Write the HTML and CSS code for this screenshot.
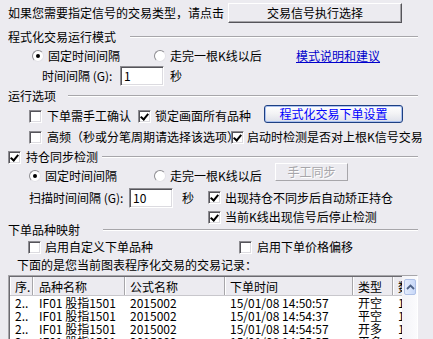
FILE: index.html
```html
<!DOCTYPE html>
<html lang="zh-CN">
<head>
    <meta charset="UTF-8">
    <title>程式化交易设置</title>
    <link rel="stylesheet" href="styles.css">
</head>
<body>
    <div class="dialog">
        <div class="row r-top">
            <span>如果您需要指定信号的交易类型，请点击</span>
            <button class="btn btn-top">交易信号执行选择</button>
        </div>

        <!-- 运行模式 -->
        <div class="group g-mode"><span>程式化交易运行模式</span><i class="rule"></i></div>
        <div class="row r-mode">
            <label class="opt opt-fixed"><span class="radio on"></span>固定时间间隔</label>
            <label class="opt opt-bar"><span class="radio"></span>走完一根K线以后</label>
            <a class="link" href="#">模式说明和建议</a>
        </div>
        <div class="row r-interval">
            <span class="field-label">时间间隔 (G):</span>
            <span class="input">1</span>
            <span class="unit">秒</span>
        </div>

        <!-- 运行选项 -->
        <div class="group g-opts"><span>运行选项</span><i class="rule"></i></div>
        <div class="row r-opts1">
            <label class="opt opt-confirm"><span class="chk"></span>下单需手工确认</label>
            <label class="opt opt-lock"><span class="chk on"></span>锁定画面所有品种</label>
            <button class="btn-xp">程式化交易下单设置</button>
        </div>
        <div class="row r-opts2">
            <label class="opt opt-hf"><span class="chk"></span>高频（秒或分笔周期请选择该选项）</label>
            <label class="opt opt-start"><span class="chk on"></span>启动时检测是否对上根K信号交易</label>
        </div>

        <!-- 持仓同步 -->
        <div class="group g-sync"><label class="opt"><span class="chk on"></span>持仓同步检测</label><i class="rule"></i></div>
        <div class="row r-sync">
            <label class="opt opt-sfixed"><span class="radio on"></span>固定时间间隔</label>
            <label class="opt opt-sbar"><span class="radio"></span>走完一根K线以后</label>
            <button class="btn btn-off">手工同步</button>
        </div>
        <div class="row r-scan">
            <span class="field-label scan-label">扫描时间间隔 (G):</span>
            <span class="input">10</span>
            <span class="unit unit-scan">秒</span>
            <label class="opt"><span class="chk on"></span>出现持仓不同步后自动矫正持仓</label>
        </div>
        <div class="row r-stop">
            <label class="opt"><span class="chk on"></span>当前K线出现信号后停止检测</label>
        </div>

        <!-- 品种映射 -->
        <div class="group g-map"><span>下单品种映射</span><i class="rule"></i></div>
        <div class="row r-map">
            <label class="opt opt-custom"><span class="chk"></span>启用自定义下单品种</label>
            <label class="opt opt-offset"><span class="chk"></span>启用下单价格偏移</label>
        </div>
        <div class="row r-note">下面的是您当前图表程序化交易的交易记录：</div>

        <div class="list">
            <div class="list-body">
                <div class="list-head">
                    <span>序.</span><span>品种名称</span><span>公式名称</span><span>下单时间</span><span>类型</span><span>数量</span>
                </div>
                <div class="list-row">
                    <span>2..</span><span>IF01 股指1501</span><span>2015002</span><span>15/01/08 14:50:57</span><span>开空</span><span>1</span>
                </div>
                <div class="list-row">
                    <span>2..</span><span>IF01 股指1501</span><span>2015002</span><span>15/01/08 14:54:37</span><span>平空</span><span>1</span>
                </div>
                <div class="list-row">
                    <span>2..</span><span>IF01 股指1501</span><span>2015002</span><span>15/01/08 14:54:57</span><span>开多</span><span>1</span>
                </div>
                <div class="list-row">
                    <span>2..</span><span>IF01 股指1501</span><span>2015002</span><span>15/01/08 14:55:37</span><span>平多</span><span>1</span>
                </div>
            </div>
            <div class="scroll">
                <span class="scroll-up">
                    <svg width="9" height="6" viewBox="0 0 9 6"><polyline points="1,5 4.5,1.5 8,5" fill="none" stroke="#4d6185" stroke-width="1.8"/></svg>
                </span>
            </div>
        </div>
    </div>
</body>
</html>
```

FILE: styles.css
```css
* {
    margin: 0;
    padding: 0;
    box-sizing: border-box;
}

body {
    background: #ecebf0;
    font-family: "Noto Sans CJK SC", sans-serif;
    font-size: 12px;
    line-height: 14px;
    color: #000;
}

.dialog {
    width: 433px;
    height: 339px;
    overflow: hidden;
    padding: 0 15px 0 8px;
}

.row {
    display: flex;
    align-items: center;
}

.opt {
    display: flex;
    align-items: center;
    white-space: nowrap;
}

/* 分组标题 */
.group {
    display: flex;
    align-items: center;
}

.rule {
    flex: 1;
    height: 2px;
    border-top: 1px solid #a7a6aa;
    border-bottom: 1px solid #fff;
}

.g-mode { height: 21px; }
.g-mode .rule { margin-left: 14px; }
.g-opts { height: 16px; }
.g-opts .rule { margin-left: 12px; }
.g-sync { height: 22px; }
.g-sync .rule { margin-left: 4px; }
.g-map { height: 14px; }
.g-map .rule { margin-left: 23px; }

/* 控件 */
.chk {
    width: 13px;
    height: 13px;
    margin-right: 5px;
    background: #fff;
    border: 1px solid;
    border-color: #8d8c91 #fff #fff #8d8c91;
    box-shadow: inset 1px 1px #55545a, inset -1px -1px #dcdbe0;
    flex-shrink: 0;
    position: relative;
}

.chk.on::after {
    content: "";
    position: absolute;
    left: 3px;
    top: 1px;
    width: 3px;
    height: 6px;
    border: solid #000;
    border-width: 0 2px 2px 0;
    transform: rotate(40deg);
}

.radio {
    width: 12px;
    height: 12px;
    margin-right: 4px;
    border-radius: 50%;
    background: #fff;
    border: 1px solid;
    border-color: #8d8c91 #e4e3e8 #e4e3e8 #8d8c91;
    flex-shrink: 0;
    position: relative;
}

.radio.on::after {
    content: "";
    position: absolute;
    left: 3px;
    top: 3px;
    width: 4px;
    height: 4px;
    border-radius: 50%;
    background: #000;
}

.input {
    width: 44px;
    height: 20px;
    padding: 2px 0 0 3px;
    background: #fff;
    border: 1px solid;
    border-color: #8d8c91 #fff #fff #8d8c91;
    box-shadow: inset 1px 1px #55545a, inset -1px -1px #dcdbe0;
}

.btn {
    font: inherit;
    background: #ecebf0;
    border: 1px solid;
    border-color: #fff #55545a #55545a #fff;
    box-shadow: inset -1px -1px #a7a6aa;
}

.btn-top {
    width: 174px;
    height: 20px;
    margin-left: 4px;
}

.btn-off {
    width: 73px;
    height: 18px;
    align-self: flex-start;
    margin-top: -5px;
    color: #a7a6aa;
    text-shadow: 1px 1px #fff;
    border-color: #fff #a7a6aa #a7a6aa #fff;
    box-shadow: none;
}

.btn-xp {
    font: inherit;
    width: 139px;
    height: 18px;
    align-self: flex-start;
    margin-top: 1px;
    color: #0000ff;
    border: 1px solid #1d3f82;
    border-radius: 3px;
    background: linear-gradient(#fff, #f2f2f4 50%, #dde0ea);
    box-shadow: inset 0 0 0 1px #a9c0ef;
}

.link {
    color: #0000cc;
    text-decoration: underline;
}

/* 各行 */
.r-top { height: 26px; }

.r-mode { height: 17px; padding-left: 24px; }
.opt-fixed { width: 122px; }
.opt-bar { width: 142px; }

.r-interval { height: 24px; padding-left: 34px; }
.field-label { width: 78px; }
.unit { margin-left: 6px; }

.r-opts1 { height: 24px; padding-left: 21px; }
.opt-confirm { width: 109px; }
.opt-lock { width: 126px; }
.opt-lock .chk { margin-right: 4px; }

.r-opts2 { height: 18px; padding-left: 21px; }
.opt-hf { width: 202px; }
.opt-start .chk { margin-right: 3px; }

.r-sync { height: 16px; padding-left: 21px; }
.opt-sfixed { width: 125px; }
.opt-sbar { width: 121px; }

.r-scan { height: 27px; padding-left: 21px; }
.scan-label { width: 100px; }
.unit-scan { width: 35px; margin-left: 0; padding-left: 9px; }
.r-scan .chk, .r-stop .chk { margin-right: 4px; }

.r-stop { height: 12px; padding-left: 200px; }

.r-map { height: 20px; padding-left: 20px; }
.opt-custom { width: 211px; }
.opt-custom .chk { margin-right: 4px; }

.r-note { height: 16px; padding-left: 9px; }

/* 交易记录列表 */
.list {
    display: flex;
    margin-top: 2px;
    height: 80px;
    background: #fff;
    border: 1px solid;
    border-color: #a7a6aa #fff #fff #a7a6aa;
    box-shadow: inset 1px 1px #6b6a70;
}

.list-body {
    flex: 1;
    overflow: hidden;
    padding: 1px 0 0 1px;
}

.list-head,
.list-row {
    display: grid;
    grid-template-columns: 23px 92px 100px 128px 40px 60px;
    white-space: nowrap;
}

.list-head {
    height: 19px;
    background: #ecebf0;
    border-bottom: 1px solid #c8c7cc;
}

.list-head span {
    padding: 3px 0 0 5px;
    border-right: 1px solid #a7a6aa;
    box-shadow: inset 1px 0 #fff;
}

.list-row {
    height: 13px;
    line-height: 13px;
}

.list-row span {
    padding-left: 5px;
}

.list-row span:nth-child(2),
.list-head span:nth-child(2) {
    padding-left: 6px;
}

.scroll {
    width: 15px;
    background: linear-gradient(90deg, #f3f3f7, #fbfbfd);
    padding: 3px 0 0 2px;
}

.scroll-up {
    display: flex;
    align-items: center;
    justify-content: center;
    width: 12px;
    height: 16px;
    border: 1px solid #aec0e6;
    border-radius: 2px;
    background: linear-gradient(90deg, #e4ecfc, #c8d8f8);
}
```
